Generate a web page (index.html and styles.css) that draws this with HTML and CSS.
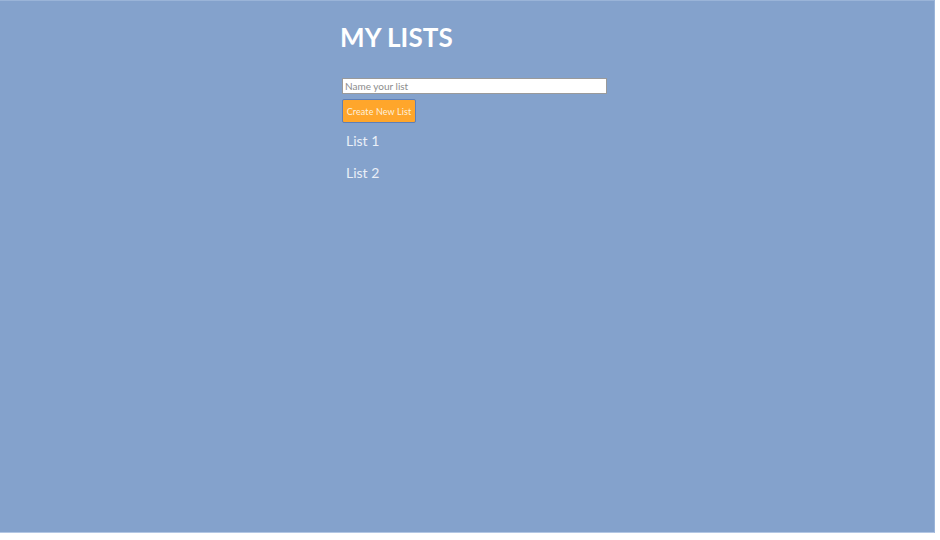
FILE: index.html
```html
<!DOCTYPE html>
<html>
<head>
<meta charset="utf-8">
<link rel="stylesheet" href="styles.css">
</head>
<body>
<div class="app">
  <main class="content">
    <h1 class="title">MY LISTS</h1>
    <form class="new-list">
      <input class="name-input" type="text" placeholder="Name your list">
      <button class="create-btn" type="button">Create New List</button>
    </form>
    <ul class="lists">
      <li class="list-item">List 1</li>
      <li class="list-item">List 2</li>
    </ul>
  </main>
</div>
</body>
</html>
```

FILE: styles.css
```css
html, body {
  margin: 0;
  padding: 0;
  background: #ffffff;
}
body {
  font-family: Lato, "Open Sans", sans-serif;
}
.app {
  width: 934px;
  height: 531px;
  background: #84a2cc;
  border-top: 1px solid #9ab4d8;
  border-bottom: 1px solid #b3c7e4;
  border-right: 1px solid #9ab4d8;
}
.content {
  margin-left: 340px;
  padding-top: 19px;
  width: 280px;
}
.title {
  margin: 0;
  color: #ffffff;
  font-size: 26px;
  font-weight: 700;
  letter-spacing: 0.1px;
  line-height: 34px;
}
.new-list {
  margin-top: 24px;
  padding-left: 2px;
  display: flex;
  flex-direction: column;
  align-items: flex-start;
  gap: 5px;
}
.name-input {
  box-sizing: border-box;
  width: 265px;
  height: 16px;
  margin: 0;
  padding: 0 2px;
  border: 1px solid #9a9a9a;
  background: #ffffff;
  font-family: inherit;
  font-size: 10px;
  outline: none;
}
.name-input::placeholder {
  color: #8d8d8d;
}
.create-btn {
  box-sizing: border-box;
  height: 24px;
  width: 74px;
  margin: 0;
  padding: 0;
  background: #ffa62b;
  border: 1px solid #5d7fb9;
  border-radius: 2px;
  color: #fdf0dc;
  font-family: inherit;
  font-size: 9px;
  letter-spacing: 0.1px;
  white-space: nowrap;
}
.lists {
  list-style: none;
  margin: 9px 0 0;
  padding: 0 0 0 6px;
  display: flex;
  flex-direction: column;
  gap: 14px;
}
.list-item {
  color: #eaeff7;
  font-size: 14px;
  font-weight: 400;
  line-height: 18px;
}
```
